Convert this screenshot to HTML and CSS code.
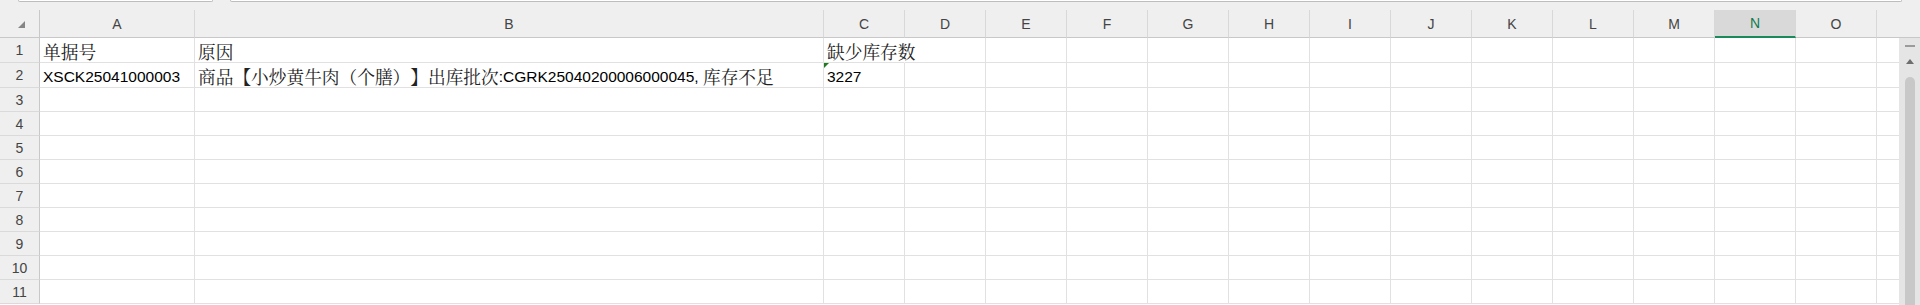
FILE: index.html
```html
<!DOCTYPE html>
<html lang="zh-CN">
<head>
<meta charset="UTF-8" />
<meta name="viewport" content="width=device-width, initial-scale=1.0"/>
<title>缺少库存</title>
<link rel="stylesheet" href="styles.css">
</head>
<body>
<div class="topbar">
<div class="box namebox"></div>
<div class="box formula"></div>
</div>
<div class="colheads">
<div class="corner"><svg width="7" height="7" viewBox="0 0 7 7"><polygon points="7,0 7,7 0,7" fill="#858585"/></svg></div>
<div>A</div><div>B</div><div>C</div><div>D</div><div>E</div><div>F</div><div>G</div><div>H</div><div>I</div><div>J</div><div>K</div><div>L</div><div>M</div><div class="sel">N</div><div>O</div><div></div>
</div>
<div class="body">
<div class="rows">
<div class="row tall"><div class="rh">1</div><div><span class="zh">单据号</span></div><div><span class="zh">原因</span></div><div class="spill"><span class="zh">缺少库存数</span></div><div></div><div></div><div></div><div></div><div></div><div></div><div></div><div></div><div></div><div></div><div></div><div></div><div></div></div>
<div class="row tall"><div class="rh">2</div><div>XSCK25041000003</div><div><span class="zh">商品【小炒黄牛肉（个膳）】出库批次</span>:CGRK25040200006000045,&nbsp;<span class="zh">库存不足</span></div><div class="flag">3227</div><div></div><div></div><div></div><div></div><div></div><div></div><div></div><div></div><div></div><div></div><div></div><div></div><div></div></div>
<div class="row"><div class="rh">3</div><div></div><div></div><div></div><div></div><div></div><div></div><div></div><div></div><div></div><div></div><div></div><div></div><div></div><div></div><div></div><div></div></div>
<div class="row"><div class="rh">4</div><div></div><div></div><div></div><div></div><div></div><div></div><div></div><div></div><div></div><div></div><div></div><div></div><div></div><div></div><div></div><div></div></div>
<div class="row"><div class="rh">5</div><div></div><div></div><div></div><div></div><div></div><div></div><div></div><div></div><div></div><div></div><div></div><div></div><div></div><div></div><div></div><div></div></div>
<div class="row"><div class="rh">6</div><div></div><div></div><div></div><div></div><div></div><div></div><div></div><div></div><div></div><div></div><div></div><div></div><div></div><div></div><div></div><div></div></div>
<div class="row"><div class="rh">7</div><div></div><div></div><div></div><div></div><div></div><div></div><div></div><div></div><div></div><div></div><div></div><div></div><div></div><div></div><div></div><div></div></div>
<div class="row"><div class="rh">8</div><div></div><div></div><div></div><div></div><div></div><div></div><div></div><div></div><div></div><div></div><div></div><div></div><div></div><div></div><div></div><div></div></div>
<div class="row"><div class="rh">9</div><div></div><div></div><div></div><div></div><div></div><div></div><div></div><div></div><div></div><div></div><div></div><div></div><div></div><div></div><div></div><div></div></div>
<div class="row"><div class="rh">10</div><div></div><div></div><div></div><div></div><div></div><div></div><div></div><div></div><div></div><div></div><div></div><div></div><div></div><div></div><div></div><div></div></div>
<div class="row"><div class="rh">11</div><div></div><div></div><div></div><div></div><div></div><div></div><div></div><div></div><div></div><div></div><div></div><div></div><div></div><div></div><div></div><div></div></div>
</div>
<div class="vscroll">
<div class="split"></div>
<div class="up"></div>
<div class="thumb"></div>
</div>
</div>
</body>
</html>
```

FILE: styles.css
```css
body {
  margin: 0;
  height: 305px;
  overflow: hidden;
  background: #fff;
  font-family: "Liberation Sans", Arial, sans-serif;
}
/* formula bar, only its bottom edge shows */
.topbar {
  height: 10px;
  display: flex;
  gap: 17px;
  padding: 0 18px;
  background: #efefef;
}
.box {
  box-sizing: border-box;
  height: 2px;
  background: #fff;
  border: 1px solid #bdbdbd;
  border-top: 0;
  border-radius: 0 0 4px 4px;
}
.namebox {
  width: 195px;
}
.formula {
  flex: 1;
}
/* column letters */
.colheads {
  display: grid;
  grid-template-columns: 40px 155px 629px repeat(13, 81px) 1fr;
  height: 28px;
  background: #efefef;
}
.colheads > div {
  box-sizing: border-box;
  border-right: 1px solid #d8d8d8;
  border-bottom: 1px solid #c8c8c8;
  display: flex;
  align-items: center;
  justify-content: center;
  font-size: 14px;
  color: #444;
}
.colheads > div:last-child {
  border-right: 0;
}
.colheads > .corner {
  justify-content: flex-start;
  align-items: flex-end;
  padding: 0 0 9px 18px;
  border-right-color: #c8c8c8;
}
.colheads > .sel {
  background: #d9d9d9;
  color: #127a4c;
  border-bottom: 2px solid #1b8a5a;
}
/* grid */
.body {
  display: flex;
  height: 267px;
}
.rows {
  width: 1899px;
  border-bottom: 1px solid transparent;
}
.row {
  display: grid;
  grid-template-columns: 40px 155px 629px repeat(13, 81px) 22px;
  height: 24px;
}
.row.tall {
  height: 25px;
}
.row > div {
  box-sizing: border-box;
  border-right: 1px solid #e1e1e1;
  border-bottom: 1px solid #e1e1e1;
  display: flex;
  align-items: flex-end;
  padding: 0 3px 1px;
  white-space: nowrap;
  font-size: 15.5px;
  line-height: 18px;
  color: #000;
}
.row > div:last-child {
  border-right: 0;
}
.row > .rh {
  background: #efefef;
  border-right-color: #c8c8c8;
  border-bottom-color: #dadada;
  justify-content: center;
  align-items: center;
  padding: 0;
  font-size: 14px;
  color: #444;
}
.row > .spill {
  border-right-color: transparent;
}
.zh {
  font-family: "Noto Serif CJK SC", "Noto Sans CJK SC", sans-serif;
  font-size: 17.7px;
  color: #222;
  text-spacing-trim: space-all;
}
/* number stored as text marker */
.flag {
  position: relative;
}
.flag::before {
  content: "";
  position: absolute;
  top: 0;
  left: 0;
  border-top: 5px solid #1e7b1e;
  border-right: 5px solid transparent;
}
/* vertical scrollbar */
.vscroll {
  flex: 1;
  background: #e5e5e5;
  display: flex;
  flex-direction: column;
  align-items: center;
}
.split {
  width: 10px;
  height: 2px;
  background: #9b9b9b;
  margin-top: 7px;
}
.up {
  width: 0;
  height: 0;
  border-left: 4px solid transparent;
  border-right: 4px solid transparent;
  border-bottom: 5px solid #6e6e6e;
  margin-top: 12px;
}
.thumb {
  width: 10px;
  flex: 1;
  margin-top: 13px;
  background: #c8c8c8;
  border-radius: 5px 5px 0 0;
}
```
